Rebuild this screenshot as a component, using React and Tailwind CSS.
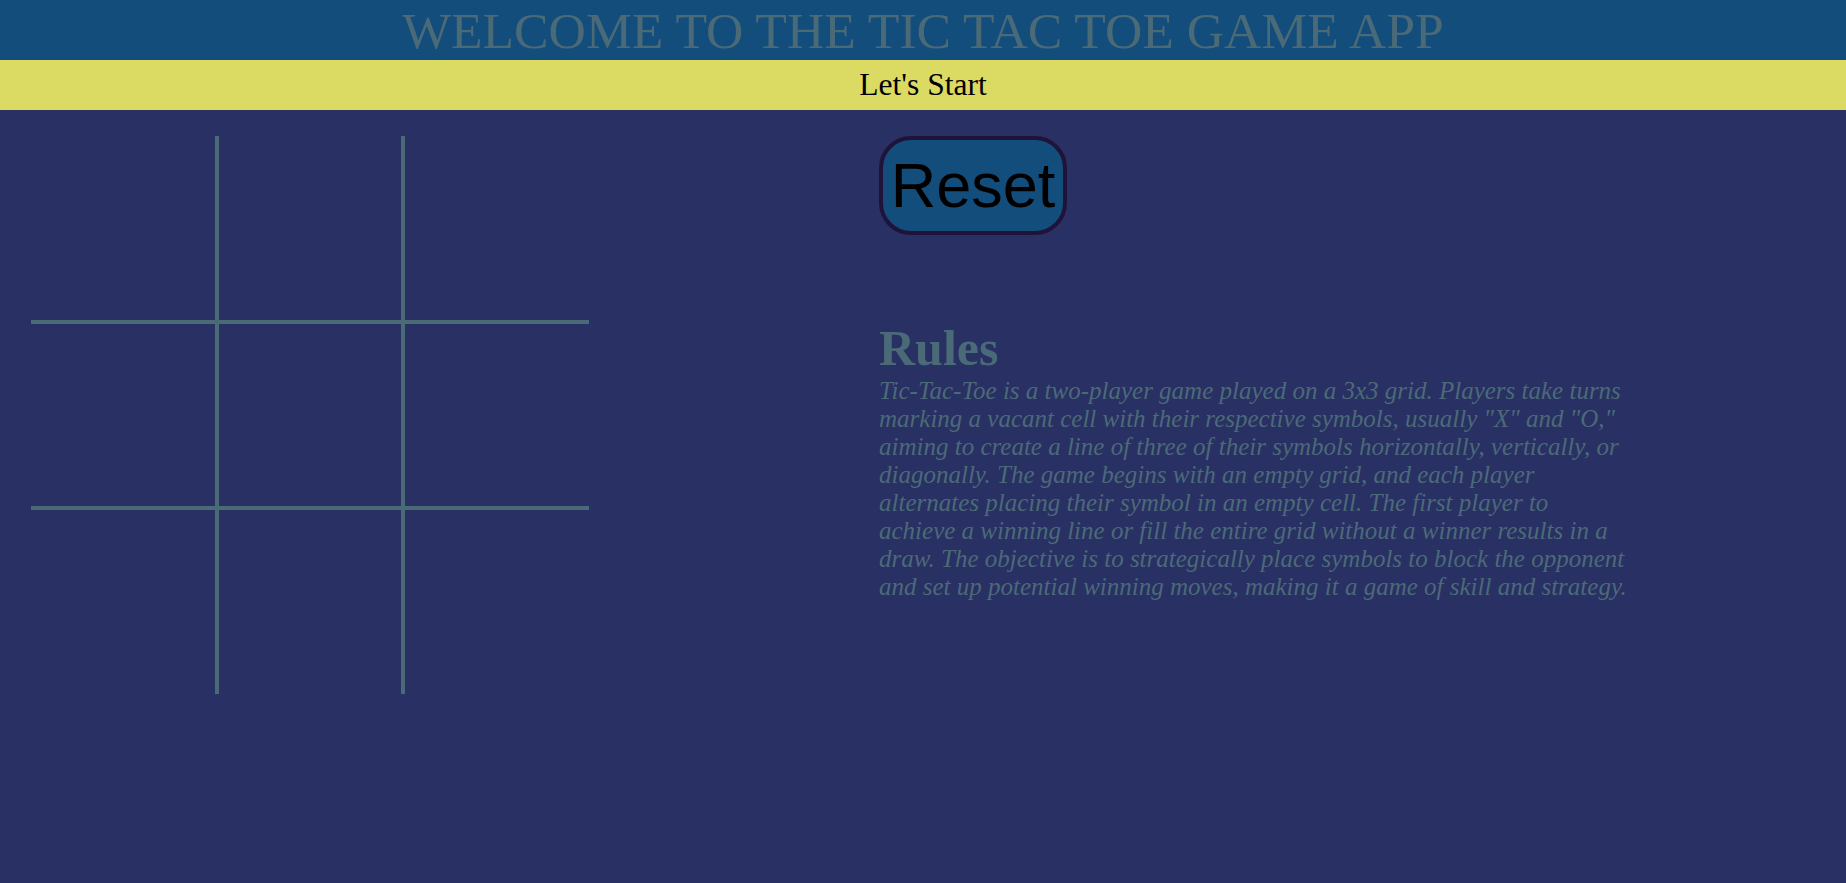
import { useState } from "react";

const cellBorders = [
  "border-t-0 border-l-0",
  "border-t-0",
  "border-t-0 border-r-0",
  "border-l-0",
  "",
  "border-r-0",
  "border-b-0 border-l-0",
  "border-b-0",
  "border-b-0 border-r-0",
];

export default function App() {
  const [cells, setCells] = useState(Array(9).fill(""));
  const [turn, setTurn] = useState("X");

  const handleClick = (idx) => {
    if (cells[idx]) return;
    const next = [...cells];
    next[idx] = turn;
    setCells(next);
    setTurn(turn === "X" ? "O" : "X");
  };

  const reset = () => {
    setCells(Array(9).fill(""));
    setTurn("X");
  };

  return (
    <div className="min-h-[883px] w-full bg-[#293063]">
      {/* Title bar */}
      <div className="h-[60px] bg-[#124d7c] flex items-center justify-center">
        <h1 className="text-[51.7px] leading-none text-[#4b6a78] font-['Liberation_Serif',serif] pt-[2px]">
          WELCOME TO THE TIC TAC TOE GAME APP
        </h1>
      </div>
      <div className="h-[50px] bg-[#dbdb63] flex items-center justify-center">
        <span className="text-[31.5px] text-black font-['Liberation_Serif',serif]">Let's Start</span>
      </div>

      <div className="flex pt-[26px]">
        {/* Board */}
        <div className="w-[879px] pl-[31px]">
          <div className="grid grid-cols-3 w-[558px]">
            {cells.map((val, idx) => (
              <div
                key={idx}
                onClick={() => handleClick(idx)}
                className={`w-[186px] h-[186px] border-2 border-[#4b6a78] flex items-center justify-center text-[100px] text-[#4b6a78] font-['Liberation_Sans',sans-serif] cursor-pointer ${cellBorders[idx]}`}
              >
                {val}
              </div>
            ))}
          </div>
        </div>

        {/* Controls and rules */}
        <div className="w-[750px]">
          <button
            onClick={reset}
            className="w-[188px] h-[99px] bg-[#124d7c] border-4 border-[#1f1339] rounded-[32px] text-[63px] leading-none text-black font-['Liberation_Sans',sans-serif] flex items-center justify-center"
          >
            Reset
          </button>
          <h2 className="mt-[85px] text-[50px] font-bold text-[#4b6a78] font-['Liberation_Serif',serif] leading-[57px]">
            Rules
          </h2>
          <p className="text-[25px] italic text-[#4b6a78] font-['Liberation_Serif',serif] leading-[28px]">
            Tic-Tac-Toe is a two-player game played on a 3x3 grid. Players take turns marking a vacant cell with their
            respective symbols, usually "X" and "O," aiming to create a line of three of their symbols horizontally,
            vertically, or diagonally. The game begins with an empty grid, and each player alternates placing their
            symbol in an empty cell. The first player to achieve a winning line or fill the entire grid without a winner
            results in a draw. The objective is to strategically place symbols to block the opponent and set up
            potential winning moves, making it a game of skill and strategy.
          </p>
        </div>
      </div>
    </div>
  );
}
